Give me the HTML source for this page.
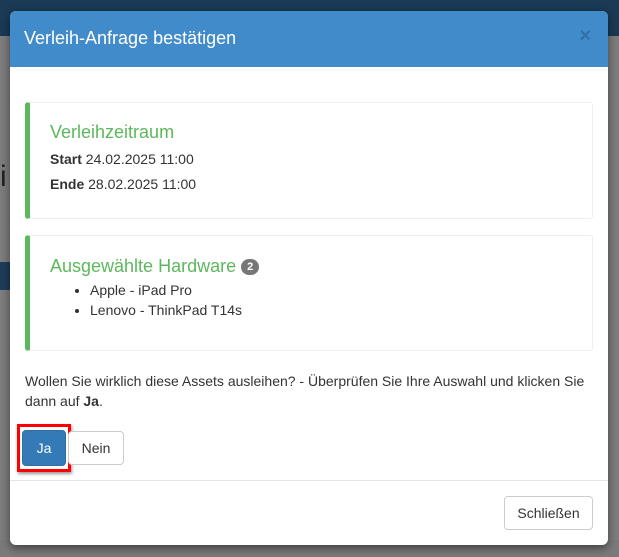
<!DOCTYPE html>
<html><head><meta charset="utf-8"><style>
*{box-sizing:border-box}
body{margin:0;width:619px;height:557px;overflow:hidden;background:#7d7d7d;font-family:"Liberation Sans",sans-serif;position:relative;color:#333}
.bg{position:absolute}
.modal{position:absolute;left:10px;top:11px;width:598px;height:534px;background:#fff;border-radius:6px;overflow:hidden;box-shadow:0 3px 9px rgba(0,0,0,.5)}
.hdr{height:56px;background:#428bca;color:#fff;font-size:18px;padding:17px 14px;position:relative}
.x{position:absolute;right:17px;top:14px;font-size:20px;font-weight:bold;color:#2f6aa0;opacity:.8}
.call{position:absolute;left:15px;width:568px;border:1px solid #eee;border-left:5px solid #5cb85c;border-radius:3px}
.t{color:#5cb85c;font-size:18px;position:absolute;left:20px}
.l{position:absolute;left:20px;font-size:14px}
.badge{display:inline-block;background:#777;color:#fff;font-size:11px;font-weight:bold;border-radius:10px;padding:2px 6px;vertical-align:2px}
ul{position:absolute;left:20px;top:44px;margin:0;padding-left:40px;font-size:14px;line-height:20px}
.btn{position:absolute;border:1px solid #ccc;border-radius:4px;font-size:14px;text-align:center;background:#fff}
</style></head><body>
<div class="bg" style="left:0;top:0;width:619px;height:36px;background:#1a3a55"></div>
<div class="bg" style="left:0;top:262px;width:10px;height:28px;background:#1e3d5a"></div>
<div class="bg" style="left:0;top:160px;width:10px;height:40px;font-size:30px;color:#222">i</div>
<div class="bg" style="left:0;top:540px;width:619px;height:17px;background:#7a7a7a"></div>
<div class="modal">
<div class="hdr">Verleih-Anfrage bestätigen<span class="x">×</span></div>
<div class="call" style="top:91px;height:117px">
<div class="t" style="top:19px">Verleihzeitraum</div>
<div class="l" style="top:48px"><b>Start</b> 24.02.2025 11:00</div>
<div class="l" style="top:73px"><b>Ende</b> 28.02.2025 11:00</div>
</div>
<div class="call" style="top:224px;height:116px">
<div class="t" style="top:20px">Ausgewählte Hardware <span class="badge">2</span></div>
<ul><li>Apple - iPad Pro</li><li>Lenovo - ThinkPad T14s</li></ul>
</div>
<div style="position:absolute;left:15px;top:360px;width:570px;font-size:14px;line-height:20px">Wollen Sie wirklich diese Assets ausleihen? - Überprüfen Sie Ihre Auswahl und klicken Sie dann auf <b>Ja</b>.</div>
<div style="position:absolute;left:7px;top:413px;width:54px;height:48px;border:3px solid #f00;box-shadow:1px 2px 3px rgba(0,0,0,.4)"></div>
<div class="btn" style="left:58px;top:420px;width:56px;height:34px;line-height:32px">Nein</div>
<div class="btn" style="left:12px;top:419px;width:44px;height:36px;line-height:34px;background:#337ab7;border-color:#2e6da4;color:#fff">Ja</div>
<div style="position:absolute;left:0;top:469px;width:598px;border-top:1px solid #e5e5e5"></div>
<div class="btn" style="left:494px;top:485px;width:89px;height:34px;line-height:32px">Schließen</div>
</div>
</body></html>
